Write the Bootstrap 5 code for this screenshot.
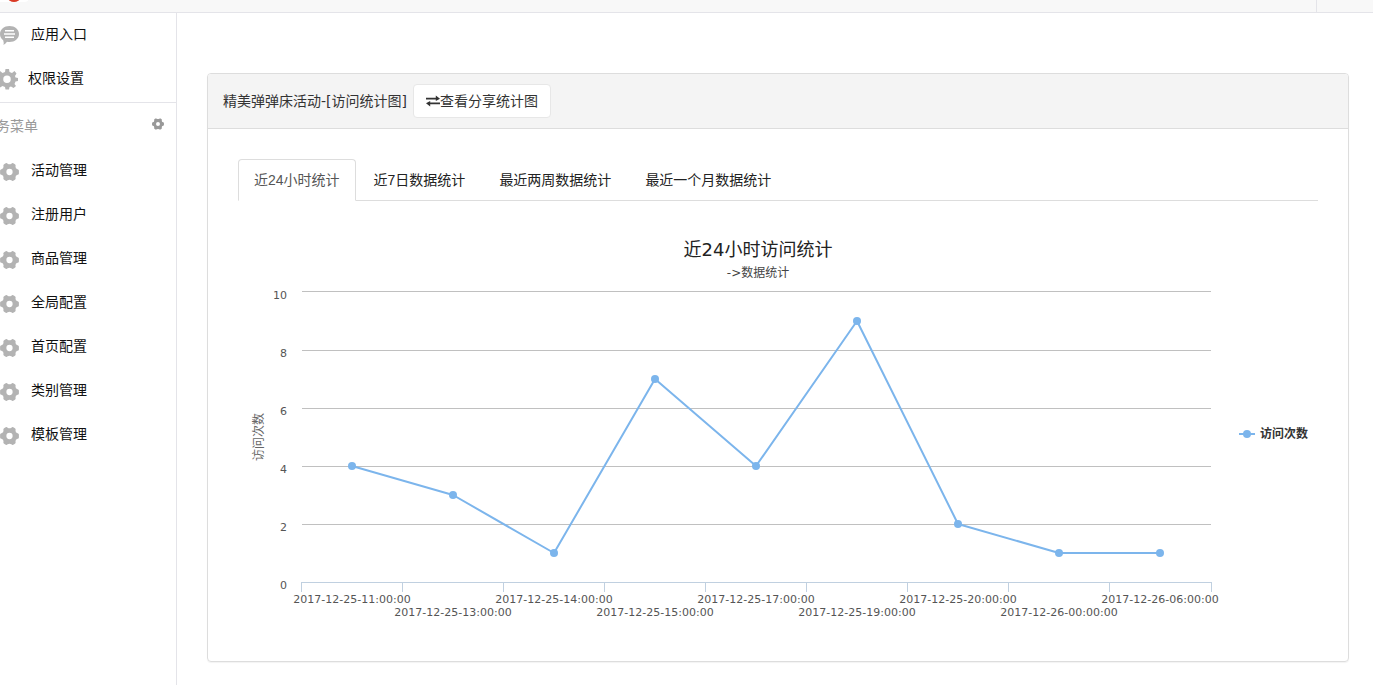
<!DOCTYPE html>
<html lang="zh-CN">
<head>
<meta charset="utf-8">
<meta name="viewport" content="width=device-width, initial-scale=1">
<title>访问统计图</title>
<link href="https://cdn.jsdelivr.net/npm/bootstrap@5.3.0/dist/css/bootstrap.min.css" rel="stylesheet">
<script src="https://cdn.jsdelivr.net/npm/bootstrap@5.3.0/dist/js/bootstrap.bundle.min.js" defer></script>
<style>
body{font:14px/20px "Liberation Sans","Noto Sans CJK SC",sans-serif;color:#333;background:#fff}
.topbar{height:13px;background:#f8f8f8;border-bottom:1px solid #e4e4e9}
.topbar-end{width:57px;border-left:1px solid #e4e4e9}
.logo{width:28px;height:12px}
.sidebar{width:177px;border-right:1px solid #e4e4e9}
.side-link{height:44px;color:#111;text-decoration:none}
.side-link svg{width:19px;height:20px;fill:#b3b3b3;margin-top:4px;margin-right:12px}
.side-top{padding-bottom:1px}
.side-top .side-link{padding-bottom:2px}
.side-top .side-link svg{margin-top:2px}
.side-link .cog{width:18px;height:22px;margin-right:10px}
.side-head{height:46px;border-top:1px solid #e4e4e9;color:#999}
.side-head h2{font-size:14px;line-height:20px;font-weight:400;margin-left:-4px}
.side-head button{margin-right:12px;padding:0 0 4px;line-height:0;color:#999}
.main-area{padding:60px 24px 23px 30px}
.panel{border:1px solid #ddd;border-radius:4px;box-shadow:0 1px 1px rgba(0,0,0,.05)}
.panel-head{background:#f4f4f4;border-bottom:1px solid #ddd;padding:10px 15px;border-radius:3px 3px 0 0;gap:6px}
.panel-head h1{font:400 14px/20px "DejaVu Sans","Noto Sans CJK SC",sans-serif}
.btn-share{--bs-btn-font-size:14px;--bs-btn-line-height:20px;--bs-btn-padding-y:6px;--bs-btn-padding-x:12px;--bs-btn-color:#333;--bs-btn-bg:#fff;--bs-btn-border-color:#e7e7e7;--bs-btn-border-radius:4px}
.panel-main{padding:30px}
.nav-tabs{--bs-nav-tabs-border-color:#ddd;--bs-nav-tabs-border-radius:4px;--bs-nav-tabs-link-active-color:#555;--bs-nav-tabs-link-active-border-color:#ddd #ddd #fff;--bs-nav-link-padding-x:15px;--bs-nav-link-padding-y:10px;--bs-nav-link-color:#222;--bs-nav-link-hover-color:#222;gap:2px}
.chart{display:block;width:100%;margin-top:30px;font-family:"DejaVu Sans","Noto Sans CJK SC",sans-serif;font-size:11px;fill:#555}
</style>
</head>
<body>
<svg class="d-none">
<symbol id="hex" viewBox="0 0 20 20"><path fill-rule="evenodd" d="M5.500 1Q7 .2 8 1.200Q10 2.500 12 1.200Q13 .2 14.500 1L16 2Q16.800 2.700 16.300 4Q16 6.500 18.500 7Q19.800 7.300 19.900 8.500V11.500Q19.800 12.700 18.500 13Q16 13.500 16.300 16Q16.800 17.300 16 18L14.500 19Q13 19.800 12 18.800Q10 17.500 8 18.800Q7 19.800 5.500 19L4 18Q3.200 17.300 3.700 16Q4 13.500 1.500 13Q.2 12.700 .1 11.500V8.500Q.2 7.300 1.500 7Q4 6.500 3.700 4Q3.200 2.700 4 2ZM10 6.700A3.300 3.300 0 1 0 10 13.300A3.300 3.300 0 1 0 10 6.700Z"/></symbol>
</svg>
<header class="topbar d-flex justify-content-between overflow-hidden">
<svg class="logo" viewBox="0 0 28 12" aria-hidden="true"><path fill="#fff" d="M0 0H29Q27 2 24 2H0Z"/><ellipse cx="14" cy="-2" rx="6" ry="4" fill="#d93a26"/></svg>
<div class="topbar-end"></div>
</header>
<div class="d-flex">
<nav class="sidebar flex-shrink-0 overflow-hidden">
<div class="side-top">
<a href="#" class="side-link d-flex align-items-center"><svg viewBox="0 0 19 20"><path fill-rule="evenodd" d="M9.500 1C14.800 1 19 4.400 19 9S14.800 17 9.500 17Q8 17 7 16.700Q5.800 18.700 3.500 20Q4 17.500 3.200 15.200Q0 13 0 9C0 4.400 4.200 1 9.500 1ZM5 5V6.500H14V5ZM4 8.300V9.800H15V8.300ZM5 11.500V13H14V11.500Z"/></svg>应用入口</a>
<a href="#" class="side-link d-flex align-items-center"><svg class="cog" viewBox="0 0 18 22"><path fill-rule="evenodd" d="M5.500 1H9L9.500 4L12 5L14.500 3L16.500 5.500L15 8L15.500 9.500L18 10V13L15.500 13.500L14.500 16L16 18L13.500 20L11 18.500L9.500 19L9 21.500H5.500L5 19L2.500 18L0 19.500V3L2.500 5L5 4ZM7 7.500A3.700 3.700 0 1 0 7 15A3.700 3.700 0 1 0 7 7.500Z"/></svg>权限设置</a>
</div>
<div class="side-head d-flex align-items-center justify-content-between"><h2 class="mb-0">务菜单</h2><button type="button" class="border-0 bg-transparent" aria-label="菜单设置"><svg width="12" height="12" fill="currentColor"><use href="#hex"/></svg></button></div>
<a href="#" class="side-link d-flex align-items-center"><svg><use href="#hex"/></svg>活动管理</a>
<a href="#" class="side-link d-flex align-items-center"><svg><use href="#hex"/></svg>注册用户</a>
<a href="#" class="side-link d-flex align-items-center"><svg><use href="#hex"/></svg>商品管理</a>
<a href="#" class="side-link d-flex align-items-center"><svg><use href="#hex"/></svg>全局配置</a>
<a href="#" class="side-link d-flex align-items-center"><svg><use href="#hex"/></svg>首页配置</a>
<a href="#" class="side-link d-flex align-items-center"><svg><use href="#hex"/></svg>类别管理</a>
<a href="#" class="side-link d-flex align-items-center"><svg><use href="#hex"/></svg>模板管理</a>
</nav>
<main class="main-area flex-grow-1">
<section class="panel">
<div class="panel-head d-flex align-items-center">
<h1 class="mb-0">精美弹弹床活动-[访问统计图]</h1>
<button type="button" class="btn btn-share d-flex align-items-center"><svg width="14" height="12" viewBox="0 0 15 12" fill="#333"><path d="M0 2.500H10.500V0L15 3.500L10.500 6V4.500H0ZM15 7.500H4.500V6L0 8.500L4.500 12V9.500H15Z"/></svg>查看分享统计图</button>
</div>
<div class="panel-main">
<ul class="nav nav-tabs">
<li class="nav-item"><a class="nav-link active" href="#">近24小时统计</a></li>
<li class="nav-item"><a class="nav-link" href="#">近7日数据统计</a></li>
<li class="nav-item"><a class="nav-link" href="#">最近两周数据统计</a></li>
<li class="nav-item"><a class="nav-link" href="#">最近一个月数据统计</a></li>
</ul>
<svg class="chart" viewBox="0 0 1080 400" role="img" aria-label="近24小时访问统计">
<g text-anchor="middle"><text x="520" y="25" font-size="18" fill="#222">近24小时访问统计</text><text x="520" y="46" font-size="12" fill="#444">-&gt;数据统计</text>
<text transform="translate(25 206) rotate(-90)" font-size="12" fill="#666">访问次数</text></g>
<path stroke="#c0c0c0" fill="none" d="M64 60.500H973M64 119.500H973M64 177.500H973M64 235.500H973M64 293.500H973"/>
<path stroke="#c0d0e0" fill="none" d="M63 351.500H974M63.500 351V361M164.500 351V361M265.500 351V361M366.500 351V361M467.500 351V361M568.500 351V361M669.500 351V361M770.500 351V361M871.500 351V361M973.500 351V361"/>
<g text-anchor="end"><text x="49" y="68">10</text><text x="49" y="126">8</text><text x="49" y="184">6</text><text x="49" y="242">4</text><text x="49" y="300">2</text><text x="49" y="358">0</text></g>
<g text-anchor="middle">
<text x="114" y="372">2017-12-25-11:00:00</text><text x="215" y="385">2017-12-25-13:00:00</text><text x="316" y="372">2017-12-25-14:00:00</text><text x="417" y="385">2017-12-25-15:00:00</text><text x="518" y="372">2017-12-25-17:00:00</text><text x="619" y="385">2017-12-25-19:00:00</text><text x="720" y="372">2017-12-25-20:00:00</text><text x="821" y="385">2017-12-26-00:00:00</text><text x="922" y="372">2017-12-26-06:00:00</text></g>
<polyline fill="none" stroke="#7cb5ec" stroke-width="2" stroke-linejoin="round" points="114,235 215,264 316,322 417,148 518,235 619,90 720,293 821,322 922,322"/>
<g fill="#7cb5ec"><circle cx="114" cy="235" r="4"/><circle cx="215" cy="264" r="4"/><circle cx="316" cy="322" r="4"/><circle cx="417" cy="148" r="4"/><circle cx="518" cy="235" r="4"/><circle cx="619" cy="90" r="4"/><circle cx="720" cy="293" r="4"/><circle cx="821" cy="322" r="4"/><circle cx="922" cy="322" r="4"/><circle cx="1009" cy="203" r="4"/><path d="M1001 202H1017V204H1001Z"/></g>
<text x="1022" y="207" font-size="12" font-weight="bold" fill="#333">访问次数</text>
</svg>
</div>
</section>
</main>
</div>
</body>
</html>
